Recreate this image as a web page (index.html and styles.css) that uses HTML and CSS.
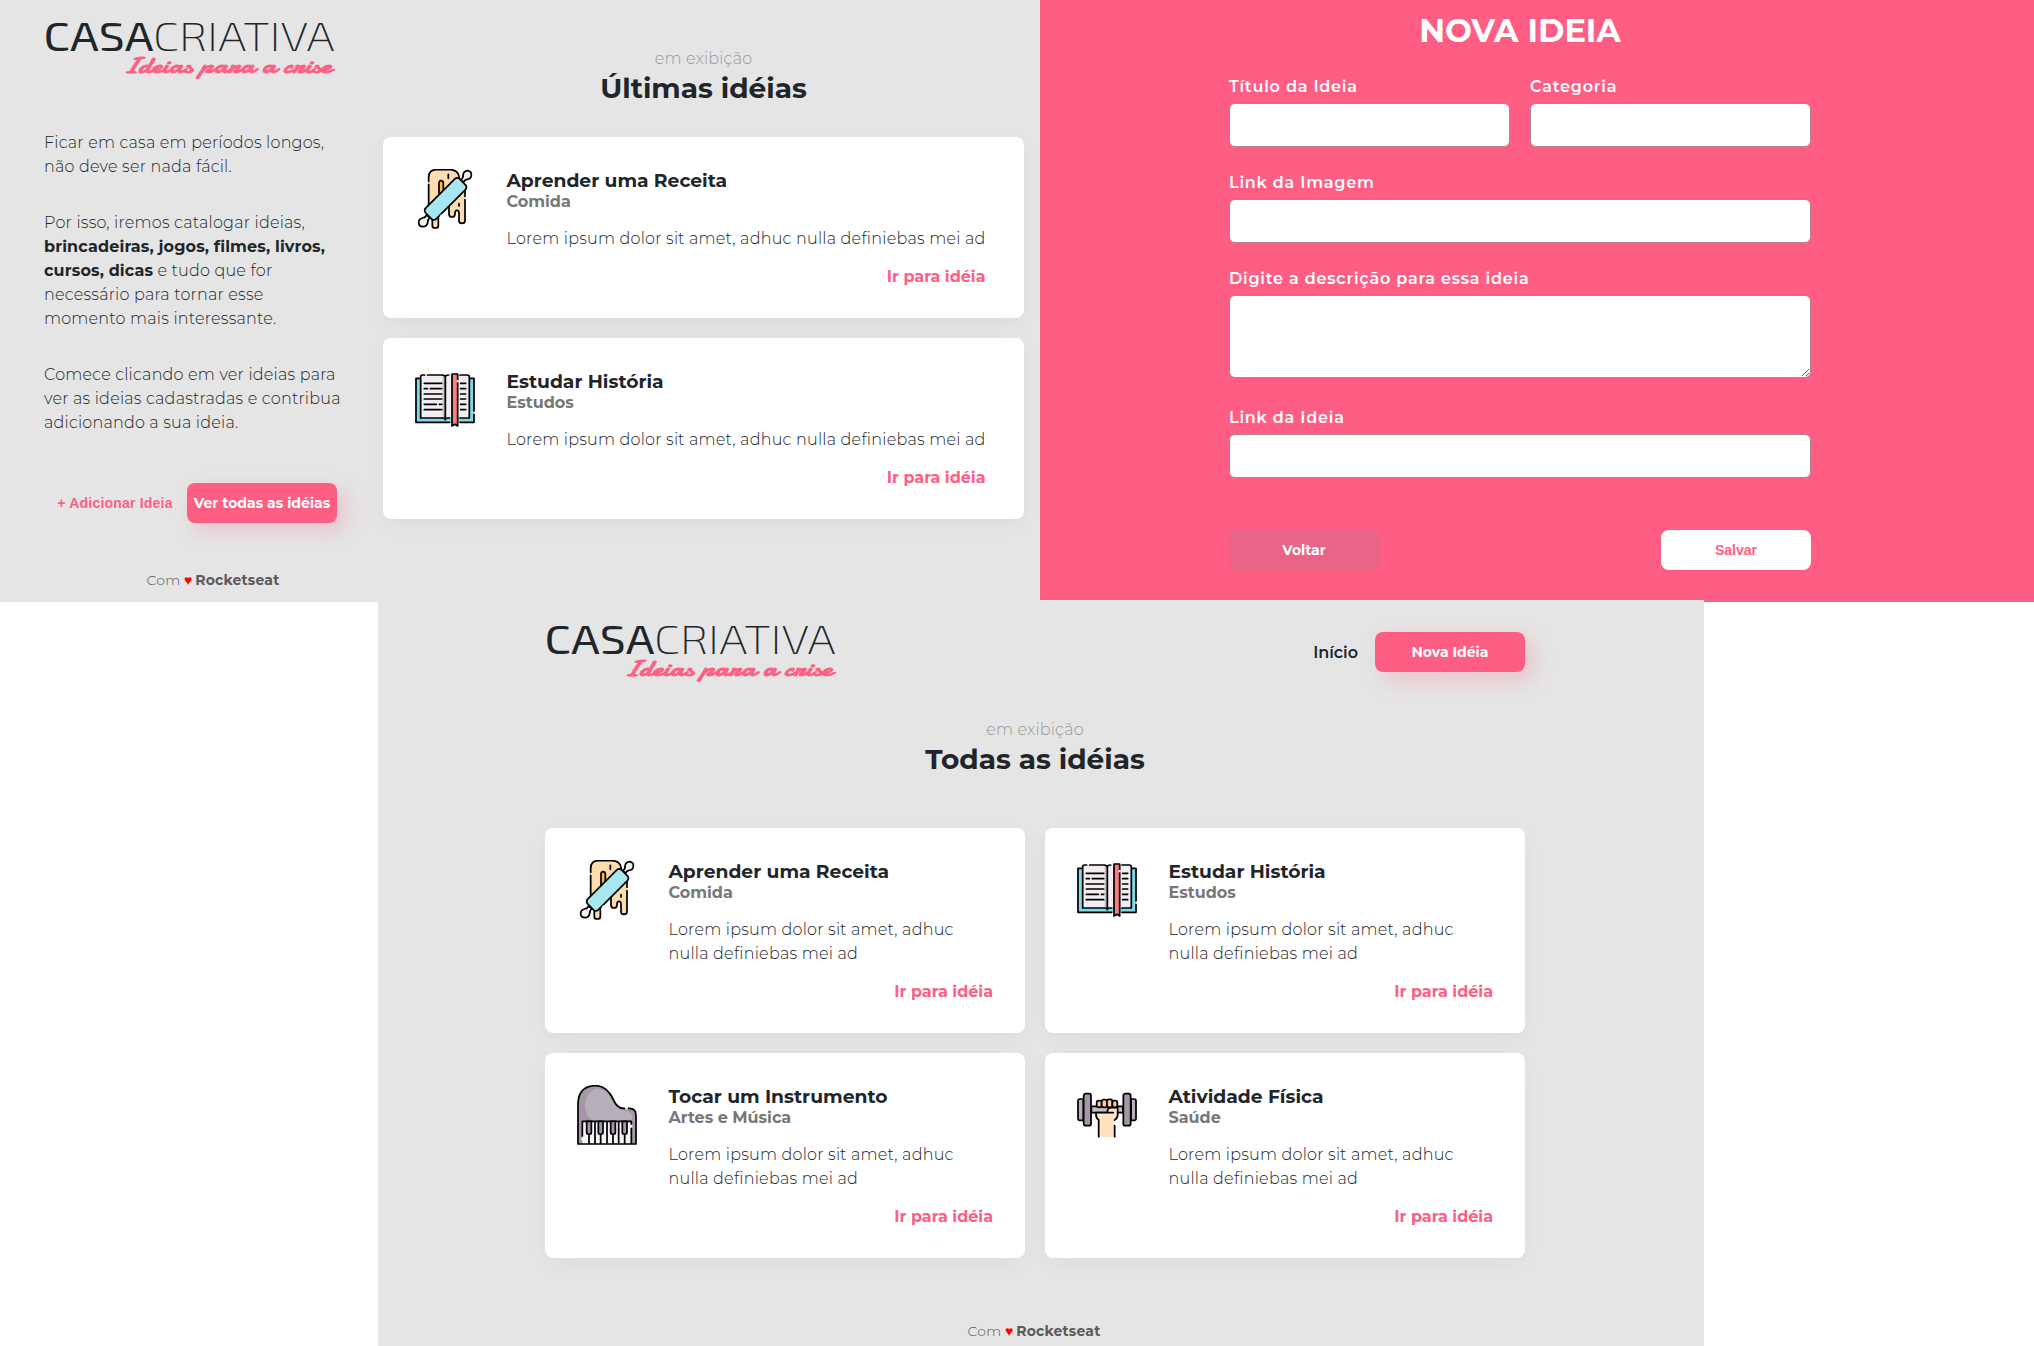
FILE: index.html
```html
<!DOCTYPE html>
<html lang="pt-BR">
<head>
<meta charset="utf-8">
<title>Casa Criativa</title>
<link rel="stylesheet" href="styles.css">
</head>
<body>
<svg class="sprite" width="0" height="0">
  <defs>
    <symbol id="logo" viewBox="0 0 296 64">
      <g class="logo-word">
        <text class="logo-casa" x="-0.500" y="31" textLength="110" lengthAdjust="spacingAndGlyphs">CASA</text>
        <text class="logo-criativa" x="109" y="31" textLength="181.500" lengthAdjust="spacingAndGlyphs">CRIATIVA</text>
      </g>
      <text class="logo-tagline" x="78.500" y="53" textLength="209" lengthAdjust="spacingAndGlyphs">Ideias para a crise</text>
    </symbol>
    <symbol id="receita" viewBox="0 0 180 180">
      <path fill="#ffdcad" d="M41 120V25Q41 2 64 2h46q22 2 24 24l16 37v92q0 8-9 8t-9-8v-20q0-11-6-11t-6 11q0 9-9 9t-9-9V100L70 130v40q0 7-9 7t-9-7v-40z"/>
      <path fill="#fdb84b" d="M72 80V44q0-8 7-8t7 8v28z"/>
      <g class="ink">
        <path d="M41 37V25Q41 2 64 2h44q22 2 25 24M41 46v64M72 76V43q0-8 6.500-8t6.500 8v20M100 16v12M150 58v24M150 92v63q0 8-9 8t-9-8v-21q0-10-6-10t-6 10q0 10-9 10t-9-10v-22M132 104v7M52 148v22q0 7 9 7t9-7v-24"/>
        <path fill="#f4f1f2" d="M138 32q8-6 6-14 2-12 14-13 12 2 11 13 0 12-13 13-6 1-11 9zM44 146q-6 6-6 15-3 12-14 12-13-1-13-12 0-12 12-14 8-1 12-9z"/>
        <rect x="20" y="67" width="144" height="45" rx="10" fill="#a6e7f0" transform="rotate(-45 92 90)"/>
      </g>
      <path stroke="#fff" stroke-width="5" d="M77 137l4 4"/>
    </symbol>
    <symbol id="livro" viewBox="0 0 180 180">
      <path fill="#80dbe8" d="M3 25h174v132H3z"/>
      <path fill="#f1edf1" d="M17 15h66l8 5 8-5h64v129H99l-8 4-8-4H17z"/>
      <path fill="#c6bfc8" d="M83 15l8 5v128l-8-4z"/>
      <g class="ink">
        <path d="M16 25H3v132h101M135 157h42v-24M177 123V25h-14M29 15H22q-5 0-5 6v123h66q8 0 8 5 0-5 8-5h5M38 15h43q10 1 10 7 0-7 10-7M91 22v122M135 15h22q6 0 6 6v123h-28"/>
        <path d="M28 40h52M28 56h9M46 56h34M28 72h52M28 87h52M28 103h36M73 103h7M28 119h52M137 40h15M137 56h15M137 72h15M137 87h15M137 103h15M137 119h15"/>
        <path fill="#ff7b83" d="M111 12h17v156l-8-5-9 5z"/>
      </g>
      <path stroke="#fff" stroke-width="6" d="M128 30v7"/>
    </symbol>
    <symbol id="piano" viewBox="0 0 180 180">
      <path fill="#a597a7" d="M3 177V55Q5 3 55 2q35 0 54 42 12 28 36 26h14q18 2 18 22v85z"/>
      <path fill="#b7afb9" d="M24 62Q26 20 62 10q28 5 43 36 14 31 39 32 22 0 22 20v9H52Q26 100 24 62z"/>
      <path fill="#f7f4f8" d="M16 109h147v68H16z"/>
      <g class="ink">
        <path d="M143 70q-22 2-34-26Q90 2 55 2 5 3 3 55v122h174V92q0-22-20-22h-3M16 109h147v8M16 109v44M163 130v47M54 109v68M90 109v68M125 109v68M36 145v32M71 145v32M108 145v32M143 145v32"/>
        <path fill="#a597a7" d="M29 109h14v34q0 4-4 4h-6q-4 0-4-4zM64 109h14v34q0 4-4 4h-6q-4 0-4-4zM101 109h14v34q0 4-4 4h-6q-4 0-4-4zM136 109h14v34q0 4-4 4h-6q-4 0-4-4z"/>
      </g>
      <path stroke="#fff" stroke-width="6" d="M145 70h7M16 158v7M163 121v6"/>
    </symbol>
    <symbol id="halter" viewBox="0 0 180 180">
      <g class="ink">
        <path fill="#c5bdc8" d="M43 64h95v19H43z"/>
        <path fill="#b7afb9" d="M19 42H8q-5 0-5 6v52q0 6 5 6h11zM162 42h10q5 0 5 6v52q0 6-5 6h-10z"/>
        <rect x="20" y="26" width="22" height="96" rx="6" fill="#a597a7"/>
        <rect x="139" y="26" width="22" height="96" rx="6" fill="#a597a7"/>
        <path fill="#ffe0bf" stroke="none" d="M57 83h32l4-16h29v25l-9 14v50H65v-50l-8-14z"/>
        <path d="M65 155v-50q-8-6-8-16v-6h52M91 81q0-13 12-13h19v22q0 10-9 15M113 122v33"/>
        <g fill="#fdc997">
          <rect x="59" y="47" width="15" height="20" rx="6"/>
          <rect x="74" y="44" width="16" height="23" rx="6"/>
          <rect x="90" y="43" width="16" height="24" rx="6"/>
          <rect x="106" y="47" width="15" height="20" rx="6"/>
        </g>
      </g>
    </symbol>
  </defs>
</svg>

<main class="canvas">
  <section class="screen home">
    <aside class="intro">
      <svg class="logo"><use href="#logo"/></svg>
      <div class="intro-text">
        <p>Ficar em casa em períodos longos,<br>não deve ser nada fácil.</p>
        <p>Por isso, iremos catalogar ideias,<br><strong>brincadeiras, jogos, filmes, livros,<br>cursos, dicas</strong> e tudo que for<br>necessário para tornar esse<br>momento mais interessante.</p>
        <p>Comece clicando em ver ideias para<br>ver as ideias cadastradas e contribua<br>adicionando a sua ideia.</p>
      </div>
      <div class="intro-actions">
        <button class="link-button">+ Adicionar Ideia</button>
        <a class="button">Ver todas as idéias</a>
      </div>
      <footer class="credit">Com <span class="heart">♥</span> <strong>Rocketseat</strong></footer>
    </aside>
    <div class="latest">
      <header class="heading"><p>em exibição</p><h2>Últimas idéias</h2></header>
      <div class="list">
        <article class="card">
          <svg class="icon"><use href="#receita"/></svg>
          <div class="card-body"><h3>Aprender uma Receita</h3><h4>Comida</h4><p>Lorem ipsum dolor sit amet, adhuc nulla definiebas mei ad</p><a>Ir para idéia</a></div>
        </article>
        <article class="card">
          <svg class="icon"><use href="#livro"/></svg>
          <div class="card-body"><h3>Estudar História</h3><h4>Estudos</h4><p>Lorem ipsum dolor sit amet, adhuc nulla definiebas mei ad</p><a>Ir para idéia</a></div>
        </article>
      </div>
    </div>
  </section>

  <section class="screen form-screen">
    <form class="form">
      <h1>NOVA IDEIA</h1>
      <div class="row">
        <div class="field"><label>Título da Ideia</label><input type="text"></div>
        <div class="field"><label>Categoria</label><input type="text"></div>
      </div>
      <div class="field"><label>Link da Imagem</label><input type="text"></div>
      <div class="field field-area"><label>Digite a descrição para essa ideia</label><textarea></textarea></div>
      <div class="field"><label>Link da Ideia</label><input type="text"></div>
      <div class="form-actions">
        <a class="button back">Voltar</a>
        <button class="button save" type="button">Salvar</button>
      </div>
    </form>
  </section>

  <section class="screen all">
    <div class="topbar">
      <svg class="logo"><use href="#logo"/></svg>
      <nav class="nav"><a>Início</a><a class="button">Nova Idéia</a></nav>
    </div>
    <header class="heading"><p>em exibição</p><h2>Todas as idéias</h2></header>
    <div class="grid">
      <article class="card">
        <svg class="icon"><use href="#receita"/></svg>
        <div class="card-body"><h3>Aprender uma Receita</h3><h4>Comida</h4><p>Lorem ipsum dolor sit amet, adhuc<br>nulla definiebas mei ad</p><a>Ir para idéia</a></div>
      </article>
      <article class="card">
        <svg class="icon"><use href="#livro"/></svg>
        <div class="card-body"><h3>Estudar História</h3><h4>Estudos</h4><p>Lorem ipsum dolor sit amet, adhuc<br>nulla definiebas mei ad</p><a>Ir para idéia</a></div>
      </article>
      <article class="card">
        <svg class="icon"><use href="#piano"/></svg>
        <div class="card-body"><h3>Tocar um Instrumento</h3><h4>Artes e Música</h4><p>Lorem ipsum dolor sit amet, adhuc<br>nulla definiebas mei ad</p><a>Ir para idéia</a></div>
      </article>
      <article class="card">
        <svg class="icon"><use href="#halter"/></svg>
        <div class="card-body"><h3>Atividade Física</h3><h4>Saúde</h4><p>Lorem ipsum dolor sit amet, adhuc<br>nulla definiebas mei ad</p><a>Ir para idéia</a></div>
      </article>
    </div>
    <footer class="credit">Com <span class="heart">♥</span> <strong>Rocketseat</strong></footer>
  </section>
</main>
</body>
</html>
```
FILE: styles.css
```css
* { box-sizing: border-box; margin: 0; padding: 0; }

body {
  background: #fff;
  color: #212529;
  font-family: "Montserrat", "Inter", sans-serif;
  font-size: 16px;
  font-weight: 300;
}

.sprite { display: block; position: absolute; }

.canvas { position: relative; width: 2034px; height: 1346px; overflow: hidden; }

/* The three screens sit on the canvas like overlapping windows */
.screen { position: absolute; }
.home { left: 0; top: 0; width: 1040px; height: 602px; background: #e5e5e5; display: flex; }
.form-screen { left: 1040px; top: 0; width: 994px; height: 602px; background: #ff5e84; }
.all { left: 378px; top: 600px; width: 1326px; height: 746px; background: #e5e5e5; padding: 20px 179px 0 167px; }

/* Logo */
.logo { display: block; width: 296px; height: 64px; flex: none; }
.logo-word { font-family: "Exo 2", "Montserrat", sans-serif; font-size: 40px; fill: #212529; }
.logo-casa { font-weight: 450; }
.logo-criativa { font-weight: 230; }
.logo-tagline { font: 400 22px "Damion", "Liberation Serif", serif; fill: #ff5e84; stroke: #ff5e84; stroke-width: 0.8px; }

.ink { fill: none; stroke: #000; stroke-width: 5.2; stroke-linecap: round; stroke-linejoin: round; }

/* Intro column */
.intro { width: 383px; padding: 20px 0 0 44px; display: flex; flex-direction: column; }
.intro-text { margin-top: 47px; display: flex; flex-direction: column; gap: 32px; line-height: 24px; letter-spacing: 0.21px; white-space: nowrap; }
.intro-text strong { font-weight: 700; letter-spacing: 0.14px; }
.intro-actions { margin-top: 48px; display: flex; align-items: center; gap: 14px; padding-left: 13px; }
.link-button {
  background: none;
  border: 0;
  width: 116px;
  color: #ff5e84;
  font: 700 14px "Liberation Sans", Arial, sans-serif;
  letter-spacing: 0.2px;
  white-space: nowrap;
}
.button {
  width: 150px;
  height: 40px;
  border: 0;
  border-radius: 8px;
  background: #ff5e84;
  color: #fff;
  font-size: 14px;
  font-weight: 700;
  line-height: 40px;
  text-align: center;
  white-space: nowrap;
  box-shadow: 8px 8px 20px rgba(255, 94, 132, 0.25);
}
.credit { font-size: 14px; line-height: 18px; color: #5a5a5a; text-align: center; letter-spacing: 0.2px; }
.credit strong { font-weight: 700; }
.intro .credit { width: 338px; margin-top: 48px; }
.heart { color: #f00; font-family: "DejaVu Sans", sans-serif; font-size: 14px; line-height: 1; letter-spacing: -1px; }

/* Section headings */
.heading { text-align: center; }
.heading p { line-height: 24px; color: #999; letter-spacing: 0.18px; }
.heading h2 { font-size: 28px; font-weight: 700; line-height: 34px; }
.latest { width: 641px; padding-top: 47px; }
.list { margin-top: 32px; display: flex; flex-direction: column; gap: 20px; }

/* Cards */
.card {
  display: flex;
  gap: 31.500px;
  padding: 33px 32px 31px;
  height: 181px;
  border-radius: 8px;
  background: #fff;
  box-shadow: 0 6px 20px rgba(0, 0, 0, 0.04);
}
.icon { width: 60px; height: 60px; flex: none; margin-top: -1px; }
.card-body { flex: 1; display: flex; flex-direction: column; white-space: nowrap; }
.list .card-body { padding-right: 6.500px; }
.card h3 { font-size: 18.720px; font-weight: 700; line-height: 22px; }
.card h4 { font-size: 16px; font-weight: 700; line-height: 20px; color: #777; }
.card p { margin-top: 15px; line-height: 24px; letter-spacing: 0.22px; }
.card a { margin-top: 16px; align-self: flex-end; line-height: 20px; font-weight: 700; color: #ff5e84; }

/* New idea form */
.form { width: 582px; margin-left: 189px; padding-top: 11px; display: flex; flex-direction: column; gap: 25px; }
.form h1 { color: #fff; font-size: 32px; font-weight: 700; line-height: 40px; text-align: center; }
.row { display: flex; gap: 20px; }
.field { flex: 1; display: flex; flex-direction: column; gap: 6px; padding-top: 1px; }
.field-area { margin-bottom: 4px; }
.field label { color: #fff; font-weight: 600; line-height: 20px; letter-spacing: 0.8px; }
.field input, .field textarea {
  width: 100%;
  height: 44px;
  border: 1px solid #b58493;
  border-radius: 6px;
  background: #fff;
}
.field textarea { height: 83px; display: block; resize: vertical; }
.form-actions { margin-top: 27px; display: flex; justify-content: space-between; }
.back { background: #e96588; box-shadow: none; }
.save { background: #fff; color: #ff5e84; font: 700 14px "Liberation Sans", Arial, sans-serif; box-shadow: none; }

/* All ideas */
.topbar { display: flex; justify-content: space-between; height: 98px; padding-top: 3px; }
.nav { display: flex; gap: 17px; height: 40px; margin-top: 9px; line-height: 41px; font-weight: 600; }
.grid { margin-top: 52px; display: grid; grid-template-columns: 480px 480px; gap: 20px; }
.grid .card { height: 205px; }
.all .credit { margin-top: 64px; padding-right: 2px; }
```
